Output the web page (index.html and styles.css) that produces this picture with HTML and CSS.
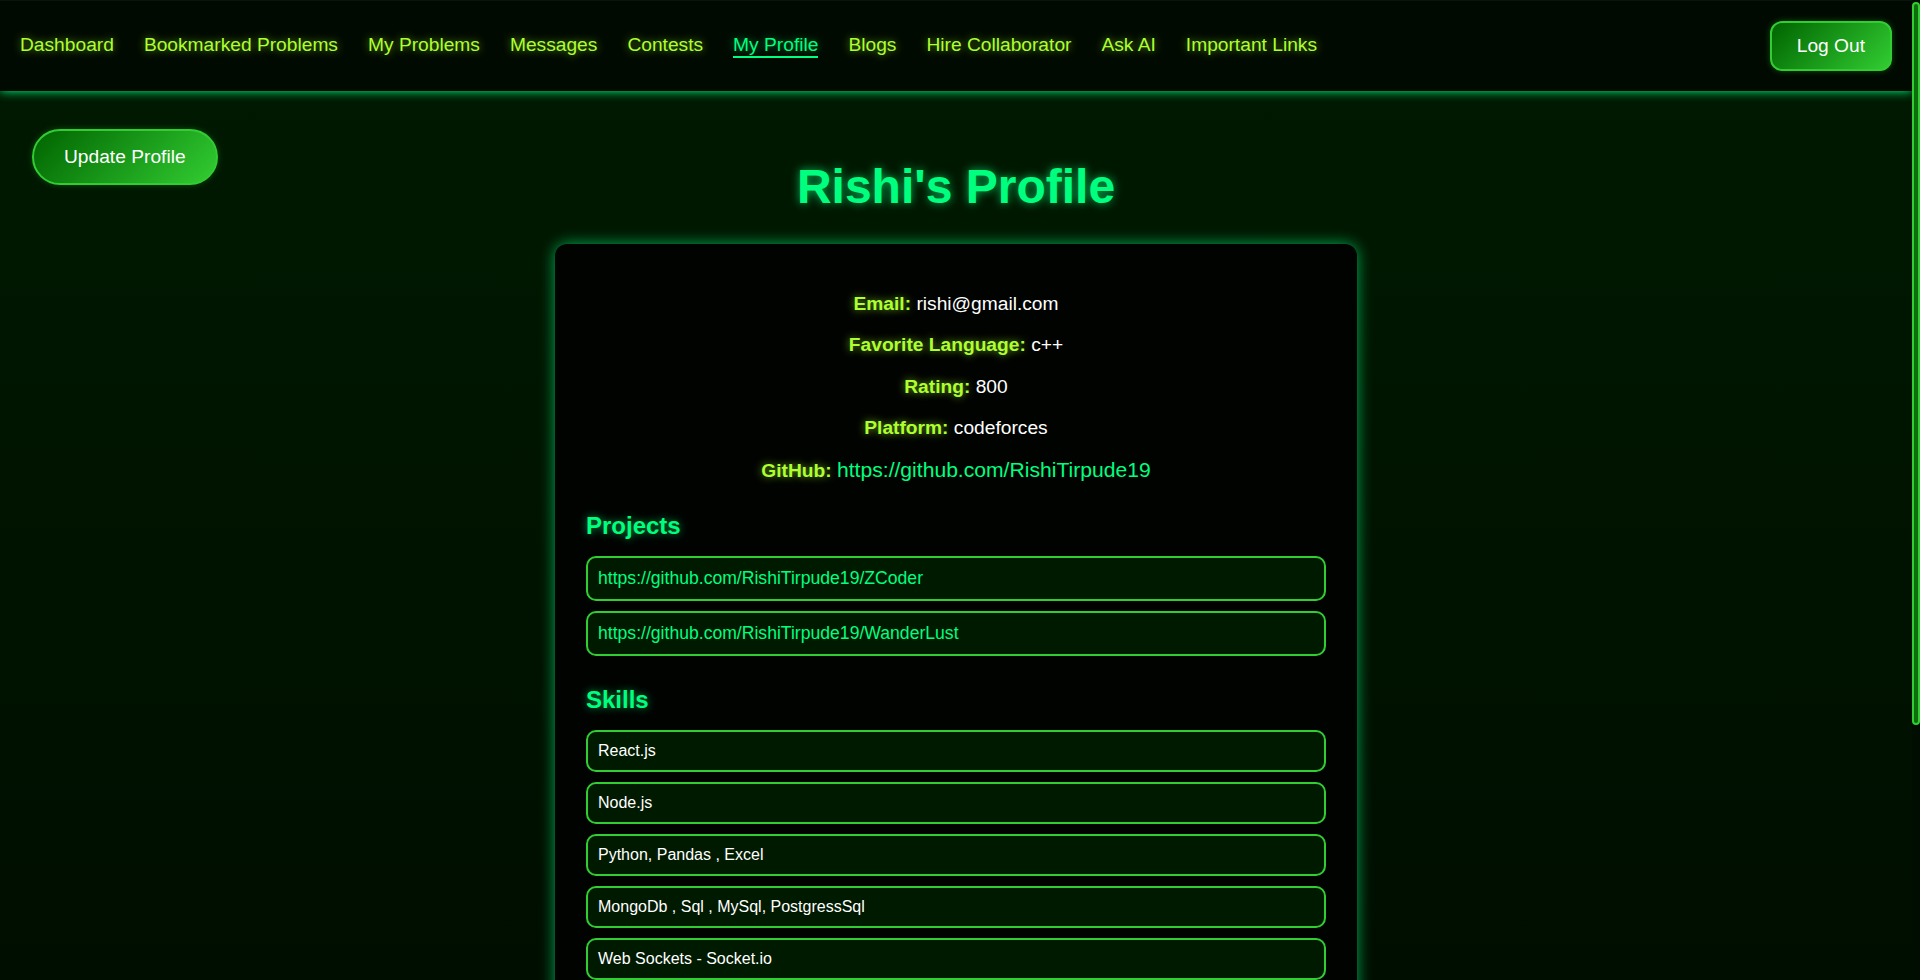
FILE: index.html
```html
<!DOCTYPE html>
<html lang="en">
<head>
<meta charset="utf-8">
<title>Rishi's Profile</title>
<link rel="stylesheet" href="styles.css">
</head>
<body>
<div class="app">
  <nav class="navbar">
    <ul class="nav-links">
      <li><a href="#" class="nav-link">Dashboard</a></li>
      <li><a href="#" class="nav-link">Bookmarked Problems</a></li>
      <li><a href="#" class="nav-link">My Problems</a></li>
      <li><a href="#" class="nav-link">Messages</a></li>
      <li><a href="#" class="nav-link">Contests</a></li>
      <li><a href="#" class="nav-link active">My Profile</a></li>
      <li><a href="#" class="nav-link">Blogs</a></li>
      <li><a href="#" class="nav-link">Hire Collaborator</a></li>
      <li><a href="#" class="nav-link">Ask AI</a></li>
      <li><a href="#" class="nav-link">Important Links</a></li>
    </ul>
    <button class="btn logout-btn">Log Out</button>
  </nav>

  <main class="page">
    <header class="profile-header">
      <button class="btn update-btn">Update Profile</button>
      <h1 class="profile-title">Rishi's Profile</h1>
      <div class="spacer"></div>
    </header>

    <section class="profile-card">
      <p class="info"><span class="label">Email:</span> rishi@gmail.com</p>
      <p class="info"><span class="label">Favorite Language:</span> c++</p>
      <p class="info"><span class="label">Rating:</span> 800</p>
      <p class="info"><span class="label">Platform:</span> codeforces</p>
      <p class="info"><span class="label">GitHub:</span> <a href="#" class="github-link">https://github.com/RishiTirpude19</a></p>

      <h3 class="section-title">Projects</h3>
      <ul class="item-list">
        <li class="item"><a href="#" class="item-link">https://github.com/RishiTirpude19/ZCoder</a></li>
        <li class="item"><a href="#" class="item-link">https://github.com/RishiTirpude19/WanderLust</a></li>
      </ul>

      <h3 class="section-title">Skills</h3>
      <ul class="item-list skills">
        <li class="item skill">React.js</li>
        <li class="item skill">Node.js</li>
        <li class="item skill">Python, Pandas , Excel</li>
        <li class="item skill">MongoDb , Sql , MySql, PostgressSql</li>
        <li class="item skill">Web Sockets - Socket.io</li>
      </ul>
    </section>
  </main>
</div>

<div class="scrollbar" aria-hidden="true">
  <div class="scrollbar-thumb"></div>
</div>
</body>
</html>
```
FILE: styles.css
```css
* { box-sizing: border-box; }

html {
  background: #000c00;
}

body {
  margin: 0;
  font-family: "Liberation Sans", Arial, sans-serif;
  color: #ffffff;
  background: linear-gradient(180deg, #001a00 0%, #000a00 100%);
  min-height: 100vh;
}

.app {
  margin-right: 8px;
}

/* fake custom scrollbar drawn over the right edge */
.scrollbar {
  position: fixed;
  top: 0;
  right: 0;
  width: 8px;
  height: 100vh;
  background: #000d00;
  z-index: 10;
}

.scrollbar-thumb {
  margin-top: 2px;
  height: 723px;
  background: #0d6e0d;
  border: 2px solid #32cd32;
  border-radius: 5px;
}

/* NAV */
.navbar {
  display: flex;
  align-items: center;
  justify-content: space-between;
  padding: 20px 20px;
  background: #000a00;
  border-top: 1px solid #0a140a;
  box-shadow: 0 0 10px #00ff7f;
  position: relative;
  z-index: 2;
}

.nav-links {
  display: flex;
  gap: 30px;
  list-style: none;
  margin: 0;
  padding: 0;
}

.nav-link {
  display: inline-block;
  font-size: 19.2px;
  color: #adff2f;
  text-decoration: none;
  text-shadow: 0 0 8px rgba(173, 255, 47, 0.6);
  border-bottom: 2px solid transparent;
  line-height: normal;
}

.nav-link.active {
  color: #00ff7f;
  border-bottom-color: #00ff7f;
  text-shadow: 0 0 8px rgba(0, 255, 127, 0.5);
}

.btn {
  font-family: "Liberation Sans", Arial, sans-serif;
  font-size: 19.2px;
  line-height: normal;
  color: #ffffff;
  background: linear-gradient(135deg, #006400 0%, #32cd32 100%);
  border: 2px solid #32cd32;
  cursor: pointer;
}

.logout-btn {
  padding: 12px 25px;
  border-radius: 12px;
  box-shadow: 0 0 6px rgba(50, 205, 50, 0.35);
}

/* PAGE */
.page {
  padding: 38px 32px 300px;
}

.profile-header {
  display: grid;
  grid-template-columns: 1fr auto 1fr;
  align-items: start;
}

.update-btn {
  justify-self: start;
  padding: 15px 30px;
  border-radius: 30px;
  box-shadow: 0 0 6px rgba(50, 205, 50, 0.3);
}

.profile-title {
  margin: 30px 0 0;
  font-size: 48px;
  font-weight: bold;
  color: #00ff7f;
  text-shadow: 0 0 10px rgba(0, 255, 127, 0.7);
  line-height: normal;
}

.profile-card {
  width: 802px;
  margin: 30px auto 0;
  padding: 30px 31px;
  background: #000300;
  border-radius: 12px;
  box-shadow: 0 0 15px rgba(0, 255, 127, 0.65);
}

.info {
  margin: 19.2px 0;
  font-size: 19.2px;
  text-align: center;
  color: #ffffff;
}

.label {
  font-weight: bold;
  color: #adff2f;
  text-shadow: 0 0 8px rgba(173, 255, 47, 0.65);
}

.github-link {
  font-size: 1.1em;
  color: #00ff7f;
  text-decoration: none;
}

.section-title {
  margin: 30px 0 16px;
  font-size: 24px;
  font-weight: bold;
  color: #00ff7f;
  text-shadow: 0 0 8px rgba(0, 255, 127, 0.6);
}

.item-list {
  list-style: none;
  margin: 0;
  padding: 0;
}

.item {
  margin-bottom: 10px;
  padding: 10px;
  background: #001a00;
  border: 2px solid #32cd32;
  border-radius: 10px;
}

.item-link {
  font-size: 17.6px;
  color: #00ff7f;
  text-decoration: none;
}

.skill {
  font-size: 16px;
  color: #ffffff;
}
```
